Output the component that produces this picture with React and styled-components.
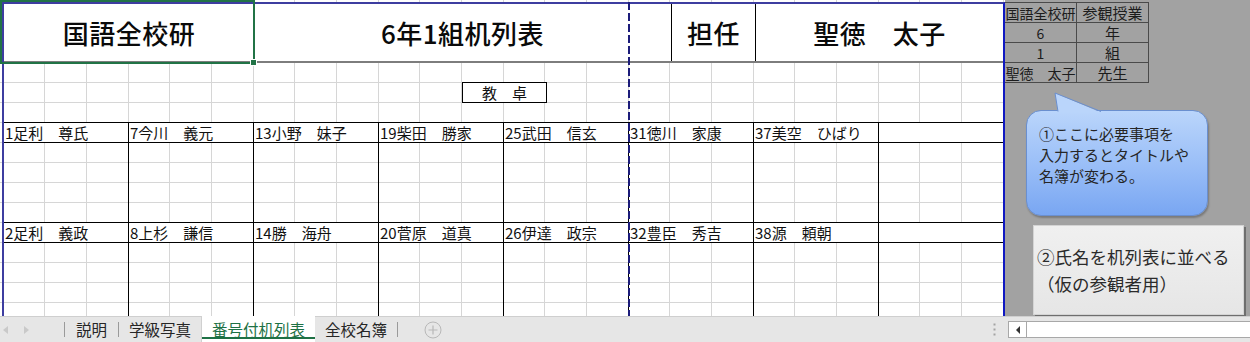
import React from 'react'
import styled, {createGlobalStyle} from 'styled-components'

const JP = `"Noto Sans CJK JP", "Noto Sans", sans-serif`

const Global = createGlobalStyle`
  html, body {
    margin: 0;
    padding: 0;
    background: #fff;
  }
  body {
    font-family: ${JP};
  }
`

const Screen = styled.div`
  width: 1250px;
  height: 342px;
  display: flex;
  flex-direction: column;
  overflow: hidden;
  font-family: ${JP};
  color: #111;
`

const Main = styled.div`
  display: flex;
  height: 316px;
`

// sheet grid: columns every ~41.7px (3 per 125px), rows every 20px
const Sheet = styled.div`
  position: relative;
  width: 1005px;
  height: 316px;
  box-sizing: border-box;
  padding: 2px 0 0 2px;
  overflow: hidden;
  background:
    linear-gradient(90deg, #d6d6d6 0 1px, transparent 1px 41px, #d6d6d6 41px 42px, transparent 42px 83px, #d6d6d6 83px 84px, transparent 84px) 3px 0 / 125px 20px,
    linear-gradient(180deg, #d6d6d6 0 1px, transparent 1px) 0 2px / 125px 20px,
    #fff;
`

const PrintArea = styled.div`
  position: relative;
  width: 1003px;
  box-sizing: border-box;
  border-left: 2px solid #3d3da0;
  border-top: 2px solid #3d3da0;
  border-right: 2px solid #1018c2;
  height: 330px;
`

const PageBreak = styled.div`
  position: absolute;
  left: 624px;
  top: -2px;
  bottom: 0;
  width: 2px;
  background: repeating-linear-gradient(180deg, #1c1c7a 0 8px, transparent 8px 11px);
  z-index: 3;
`

const HeaderRow = styled.div`
  display: flex;
  height: 57px;
  border-bottom: 2px solid #7d7d7d;
  background: #fff;
`

const HeadCell = styled.div`
  position: relative;
  width: ${p => p.$w}px;
  flex: ${p => (p.$grow ? 1 : 'none')};
  display: flex;
  align-items: center;
  justify-content: center;
  border-right: ${p => (p.$line ? '1px solid #000' : 'none')};
  font-size: 26px;
  font-weight: 500;
  letter-spacing: 0.5px;
  white-space: pre;
  color: #0a0a0a;
`

const Selection = styled.div`
  position: absolute;
  left: -4px;
  top: -4px;
  right: -1px;
  bottom: -3px;
  border: 2px solid #217346;
  pointer-events: none;
  &::after {
    content: '';
    position: absolute;
    right: -4px;
    bottom: -4px;
    width: 5px;
    height: 5px;
    background: #217346;
    border: 1px solid #fff;
  }
`

const Spacer = styled.div`
  height: 59px;
  box-sizing: border-box;
  padding: 19px 0 0 458px;
`

const Desk = styled.div`
  width: 85px;
  height: 21px;
  box-sizing: border-box;
  border: 1px solid #000;
  background: #fff;
  display: flex;
  align-items: center;
  justify-content: center;
  font-size: 15px;
  line-height: 19px;
  white-space: pre;
`

const Block = styled.div`
  display: flex;
  border-top: 1px solid #000;
`

const Seat = styled.div`
  width: 125px;
  flex: none;
  box-sizing: border-box;
  border-right: 1px solid #000;
  &:last-child {
    width: 124px;
    border-right: none;
  }
`

const Name = styled.div`
  height: 19px;
  border-bottom: 1px solid #000;
  background: #fff;
  padding-left: 1px;
  font-size: 15px;
  line-height: 19px;
  white-space: pre;
  overflow: hidden;
`

const SeatBody = styled.div`
  height: 79px;
`

const Outside = styled.div`
  flex: 1;
  background: #a2a2a2;
  padding-top: 2px;
  display: flex;
  flex-direction: column;
  align-items: flex-start;
`

const RefTable = styled.div`
  display: grid;
  grid-template-columns: 72px 72px;
  border-top: 1px solid #4a4a4a;
`

const RefCell = styled.div`
  height: 19px;
  border-bottom: 1px solid #4a4a4a;
  border-right: 1px solid #4a4a4a;
  display: flex;
  justify-content: center;
  overflow: hidden;
  white-space: pre;
  font-size: 14px;
  line-height: 20px;
  color: #1c1c1c;
  &:nth-child(2n) {
    width: 71px;
    font-size: 15px;
  }
`

const Bubble = styled.div`
  position: relative;
  margin: 27px 0 0 21px;
  width: 182px;
  height: 106px;
  box-sizing: border-box;
  border: 1px solid #6a8fcf;
  border-radius: 15px;
  background: linear-gradient(180deg, #bad5fb 0%, #98bdf7 55%, #79a6f2 100%);
  box-shadow: 1px 2px 2px rgba(0, 0, 0, 0.25);
  padding: 12px 8px 0 12px;
  font-size: 15px;
  line-height: 21px;
  color: #262626;
`

const Pointer = styled.svg`
  position: absolute;
  left: 0;
  top: -19px;
  overflow: visible;
`

const Note = styled.div`
  margin: 9px 0 0 28px;
  width: 211px;
  height: 90px;
  box-sizing: border-box;
  background: linear-gradient(180deg, #f0f0f0, #e6e6e6);
  border: 1px solid #d4d4d4;
  box-shadow: 2px 2px 0 #6e6e6e;
  display: flex;
  flex-direction: column;
  justify-content: center;
  padding-left: 3px;
  font-size: 17.5px;
  line-height: 27px;
  color: #2b2b2b;
  white-space: pre;
`

const TabBar = styled.div`
  height: 26px;
  box-sizing: border-box;
  border-top: 1px solid #cfcfcf;
  background: #e6e6e6;
  display: flex;
  align-items: stretch;
  font-size: 15.5px;
  color: #262626;
`

const Arrows = styled.div`
  width: 64px;
  display: flex;
  align-items: center;
  gap: 16px;
  padding-left: 3px;
  box-sizing: border-box;
`

const Tri = styled.span`
  width: 0;
  height: 0;
  border-top: 4px solid transparent;
  border-bottom: 4px solid transparent;
  ${p => (p.$left ? 'border-right: 5px solid #c9c9c9;' : 'border-left: 5px solid #c9c9c9;')}
`

const Sep = styled.span`
  width: 1px;
  align-self: center;
  height: 15px;
  background: #9a9a9a;
`

const Tab = styled.div`
  display: flex;
  align-items: center;
  padding: 0 ${p => p.$pad || 11}px 1px;
  box-sizing: border-box;
  ${p =>
    p.$active &&
    `
    background: #fff;
    color: #1e7145;
    border-left: 1px solid #d0d0d0;
    box-shadow: inset 0 -3px 0 #fff, inset 0 -5px 0 #1e7145;
    margin-top: -1px;
  `}
`

const AddBtn = styled.svg`
  align-self: center;
  margin-left: 26px;
`

const Grow = styled.div`
  flex: 1;
`

const Dots = styled.svg`
  align-self: center;
  margin-right: 12px;
`

const HScroll = styled.div`
  align-self: center;
  width: 242px;
  height: 17px;
  box-sizing: border-box;
  border: 1px solid #a8a8a8;
  border-right: none;
  background: #fff;
  display: flex;
`

const ScrollBtn = styled.div`
  width: 17px;
  border-right: 1px solid #a8a8a8;
  display: flex;
  align-items: center;
  justify-content: center;
  &::before {
    content: '';
    border-top: 4px solid transparent;
    border-bottom: 4px solid transparent;
    border-right: 4px solid #333;
  }
`

const seats = [
    ['1足利　尊氏', '7今川　義元', '13小野　妹子', '19柴田　勝家', '25武田　信玄', '31徳川　家康', '37美空　ひばり', ''],
    ['2足利　義政', '8上杉　謙信', '14勝　海舟', '20菅原　道真', '26伊達　政宗', '32豊臣　秀吉', '38源　頼朝', ''],
]

const refs = ['国語全校研', '参観授業', '6', '年', '1', '組', '聖徳　太子', '先生']

const App = () => {
    return (
        <Screen>
            <Global/>
            <Main>
                <Sheet>
                    <PrintArea>
                        <PageBreak/>
                        <HeaderRow>
                            <HeadCell $w={250}>国語全校研<Selection/></HeadCell>
                            <HeadCell $w={417} $line>6年1組机列表</HeadCell>
                            <HeadCell $w={83} $line>担任</HeadCell>
                            <HeadCell $grow>聖徳　太子</HeadCell>
                        </HeaderRow>
                        <Spacer>
                            <Desk>教　卓</Desk>
                        </Spacer>
                        {seats.map((row, i) => (
                            <Block key={i}>
                                {row.map((n, j) => (
                                    <Seat key={j}>
                                        <Name>{n}</Name>
                                        <SeatBody/>
                                    </Seat>
                                ))}
                            </Block>
                        ))}
                    </PrintArea>
                </Sheet>
                <Outside>
                    <RefTable>
                        {refs.map((r, i) => <RefCell key={i}>{r}</RefCell>)}
                    </RefTable>
                    <Bubble>
                        <Pointer width="80" height="20">
                            <polygon points="28,1 31,20.5 74,20.5" fill="#bad5fb"/>
                            <polyline points="31,19.5 28,1 74,19.5" fill="none" stroke="#6a8fcf" strokeWidth="1"/>
                        </Pointer>
                        ①ここに必要事項を<br/>入力するとタイトルや<br/>名簿が変わる。
                    </Bubble>
                    <Note>{'②氏名を机列表に並べる\n（仮の参観者用）'}</Note>
                </Outside>
            </Main>
            <TabBar>
                <Arrows><Tri $left/><Tri/></Arrows>
                <Sep/>
                <Tab>説明</Tab>
                <Sep/>
                <Tab $pad={10}>学級写真</Tab>
                <Tab $active $pad={10}>番号付机列表</Tab>
                <Tab $pad={10}>全校名簿</Tab>
                <Sep/>
                <AddBtn width="18" height="18" viewBox="0 0 18 18">
                    <circle cx="9" cy="9" r="8" fill="none" stroke="#b8b8b8"/>
                    <path d="M9 4.5v9M4.5 9h9" stroke="#b8b8b8" strokeWidth="1.2"/>
                </AddBtn>
                <Grow/>
                <Dots width="3" height="14" viewBox="0 0 3 14">
                    <rect x="0.5" y="0.5" width="2" height="2" fill="#a3a3a3"/>
                    <rect x="0.5" y="5.5" width="2" height="2" fill="#a3a3a3"/>
                    <rect x="0.5" y="10.5" width="2" height="2" fill="#a3a3a3"/>
                </Dots>
                <HScroll><ScrollBtn/></HScroll>
            </TabBar>
        </Screen>
    )
}

export default App
